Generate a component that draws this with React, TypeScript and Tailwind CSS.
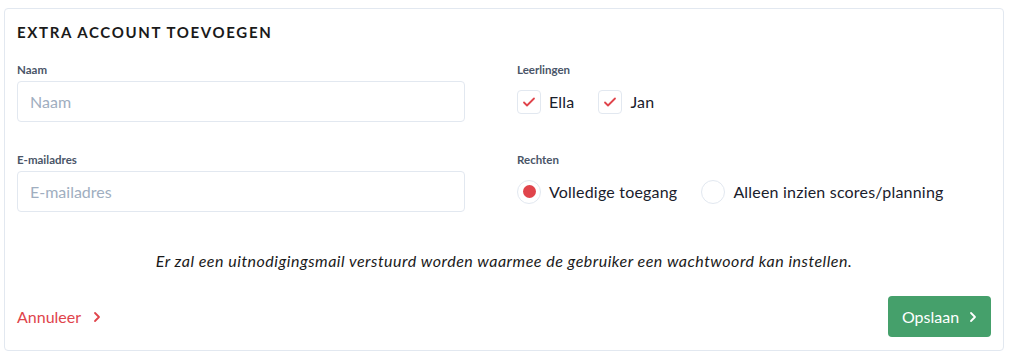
import React from "react"

const Chevron = ({ className = "" }: { className?: string }) => (
  <svg className={className} width="8" height="12" viewBox="0 0 8 12" fill="none" stroke="currentColor" strokeWidth="1.8" strokeLinecap="round" strokeLinejoin="round">
    <path d="M2 2l4 4-4 4" />
  </svg>
)

const CheckMark = () => (
  <svg width="14" height="14" viewBox="0 0 14 14" fill="none" stroke="#e0444b" strokeWidth="1.8" strokeLinecap="round" strokeLinejoin="round">
    <path d="M2 7.5l3 3 7-7" />
  </svg>
)

function Checkbox({ label }: { label: string }) {
  return (
    <label className="flex items-center">
      <span className="w-6 h-6 rounded-[4px] border border-[#e2e8f0] bg-white flex items-center justify-center">
        <CheckMark />
      </span>
      <span className="ml-2 text-[16px] tracking-[0.2px] text-[#1a202c]">{label}</span>
    </label>
  )
}

function Radio({ label, checked }: { label: string; checked?: boolean }) {
  return (
    <label className="flex items-center">
      <span className="w-6 h-6 rounded-full border border-[#e2e8f0] bg-white flex items-center justify-center">
        {checked && <span className="w-[13px] h-[13px] rounded-full bg-[#e0444b]" />}
      </span>
      <span className="ml-2 text-[16px] tracking-[0.2px] text-[#1a202c]">{label}</span>
    </label>
  )
}

function Field({ label, placeholder, className = "" }: { label: string; placeholder: string; className?: string }) {
  return (
    <div className={className}>
      <div className="text-[11.5px] leading-[14px] font-bold text-[#4a5568] mb-1">{label}</div>
      <input
        placeholder={placeholder}
        className="w-full h-[41px] rounded-[4px] border border-[#e2e8f0] px-3 text-[16px] placeholder:text-[#a0aec0] outline-none"
      />
    </div>
  )
}

export default function App() {
  return (
    <div className="min-h-screen bg-white pt-2 pl-1" style={{ fontFamily: "Lato, 'Liberation Sans', sans-serif" }}>
      <div className="w-[1000px] h-[343px] rounded-[4px] border border-[#e2e8f0] bg-white px-[12px] pt-[13px]">
        <h2 className="text-[15px] leading-5 font-bold tracking-[0.11em] text-[#1a1a1a]">EXTRA ACCOUNT TOEVOEGEN</h2>

        <div className="flex mt-[21px]">
          <div className="w-[448px]">
            <Field label="Naam" placeholder="Naam" />
            <Field label="E-mailadres" placeholder="E-mailadres" className="mt-[31px]" />
          </div>

          <div className="ml-[52px]">
            <div className="text-[11.5px] leading-[14px] font-bold text-[#4a5568] mb-1">Leerlingen</div>
            <div className="h-[41px] flex items-center gap-[24px]">
              <Checkbox label="Ella" />
              <Checkbox label="Jan" />
            </div>

            <div className="mt-[31px] text-[11.5px] leading-[14px] font-bold text-[#4a5568] mb-1">Rechten</div>
            <div className="h-[41px] flex items-center gap-[24px]">
              <Radio label="Volledige toegang" checked />
              <Radio label="Alleen inzien scores/planning" />
            </div>
          </div>
        </div>

        <p className="mt-[39px] text-center text-[16px] leading-5 italic tracking-[0.5px] text-[#1a1a1a]">
          Er zal een uitnodigingsmail verstuurd worden waarmee de gebruiker een wachtwoord kan instellen.
        </p>

        <div className="mt-[25px] flex items-center justify-between">
          <button className="flex items-center text-[16px] text-[#e0444b]">
            Annuleer
            <Chevron className="ml-[12px]" />
          </button>
          <button className="w-[103px] h-[41px] rounded-[4px] bg-[#45a06b] text-white text-[16px] flex items-center justify-center">
            Opslaan
            <Chevron className="ml-[10px]" />
          </button>
        </div>
      </div>
    </div>
  )
}
